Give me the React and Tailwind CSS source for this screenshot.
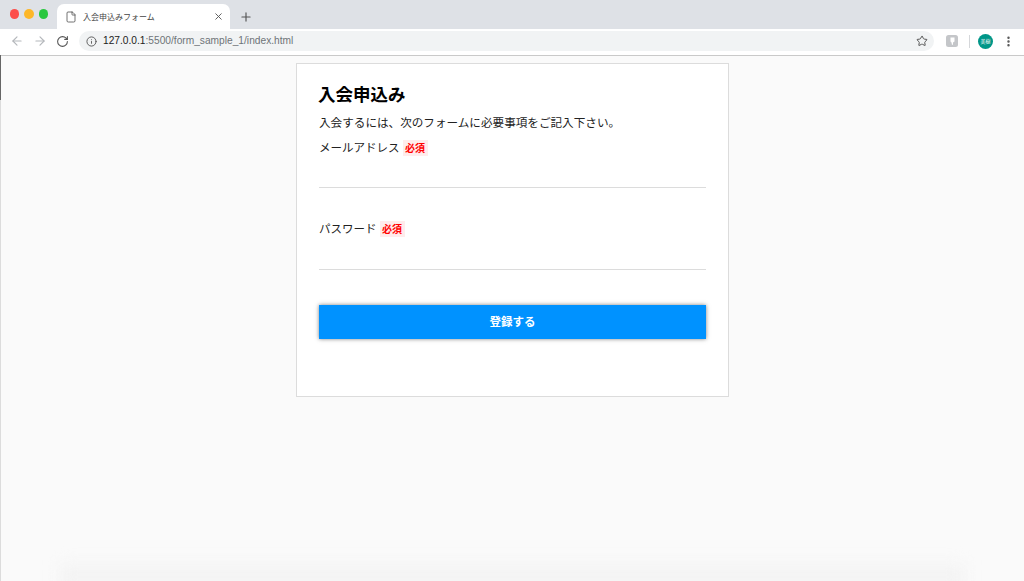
import React from "react";
import { ArrowLeft, ArrowRight, RotateCw, Info, Star, File, X, Plus, EllipsisVertical } from "lucide-react";

const jp = "font-['Noto_Sans_CJK_JP','Liberation_Sans',sans-serif]";

const Required = () => (
  <span className="ml-[3px] inline-block h-[16px] w-[25px] bg-[#ffecec] text-center text-[10px] font-bold leading-[16px] text-[#ff0000]">
    必須
  </span>
);

const Field = ({ label, className, lineClass }) => (
  <div className={className}>
    <div className="flex h-[18px] items-center text-[11.5px] text-[#222]">
      <span>{label}</span>
      <Required />
    </div>
    <div className={`h-px bg-[#dcdcdc] ${lineClass}`} />
  </div>
);

const App = () => {
  return (
    <div className={`relative flex h-[581px] w-[1024px] flex-col overflow-hidden bg-[#fafafa] ${jp}`}>
      {/* Tab bar */}
      <div className="flex h-[29px] shrink-0 bg-[#dee1e6]">
        <div className="flex w-[57px] items-center gap-[5px] pb-[1px] pl-[9.5px]">
          <span className="h-[9.5px] w-[9.5px] rounded-full bg-[#fc4e4a]" />
          <span className="h-[9.5px] w-[9.5px] rounded-full bg-[#fdb728]" />
          <span className="h-[9.5px] w-[9.5px] rounded-full bg-[#29c73f]" />
        </div>
        <div className="mt-[4px] flex h-[25px] w-[173px] items-center rounded-t-[7px] bg-white pl-[8px] pr-[6px]">
          <File size={12} strokeWidth={1.5} className="text-[#444]" />
          <span className="ml-[6px] text-[8px] text-[#444]">入会申込みフォーム</span>
          <X size={11} strokeWidth={2} className="ml-auto text-[#555]" />
        </div>
        <Plus size={14} strokeWidth={2} className="ml-[9px] mt-[10px] text-[#555]" />
      </div>

      {/* Address bar */}
      <div className="flex h-[27px] shrink-0 items-center border-b border-[#c9c9c9] bg-white pb-[2px]">
        <ArrowLeft size={14} strokeWidth={2} className="ml-[10px] text-[#b4b7bb]" />
        <ArrowRight size={14} strokeWidth={2} className="ml-[9px] text-[#b4b7bb]" />
        <RotateCw size={13} strokeWidth={2} className="ml-[9px] text-[#555]" />
        <div className="ml-[10px] flex h-[20px] w-[855px] items-center rounded-full bg-[#f1f3f4] pl-[7px]">
          <Info size={11} strokeWidth={2} className="text-[#555]" />
          <span className="ml-[6px] font-['Liberation_Sans',sans-serif] text-[10.2px] text-[#6f7478]">
            <span className="text-[#222]">127.0.0.1</span>:5500/form_sample_1/index.html
          </span>
          <Star size={12} strokeWidth={2} className="ml-auto mr-[6px] text-[#555]" />
        </div>
        <svg viewBox="0 0 12 12" className="ml-[12px] h-[12px] w-[12px]">
          <rect width="12" height="12" rx="2.5" fill="#c4c6c9" />
          <path d="M4.5 2.5h4v4l-1.5 1v2l-1 .5-.5-2.5-1-1z" fill="#fff" />
        </svg>
        <div className="ml-[11px] h-[13px] w-px bg-[#d5d7da]" />
        <div className="ml-[8px] flex h-[15px] w-[15px] items-center justify-center rounded-full bg-[#009688] text-[5px] text-white">
          美樹
        </div>
        <EllipsisVertical size={13} strokeWidth={2.5} className="ml-[9px] text-[#555]" />
      </div>

      {/* Page */}
      <div className="flex flex-1 justify-center pl-[1px]">
        <form className="mt-[7px] h-[334px] w-[433px] border border-[#dcdcdc] bg-white px-[22px] pt-[18px]">
          <h1 className="-ml-px text-[17.5px] font-bold leading-[24px] text-black">入会申込み</h1>
          <p className="mt-[7px] text-[11.6px] leading-[18px] text-[#222]">
            入会するには、次のフォームに必要事項をご記入下さい。
          </p>
          <Field label="メールアドレス" className="mt-[8px]" lineClass="mt-[30px]" />
          <Field label="パスワード" className="mt-[32px]" lineClass="mt-[31px]" />
          <button
            type="button"
            className="mt-[35px] h-[34px] w-full bg-[#0092ff] text-[11.5px] font-bold text-white shadow-[0_0_4px_rgba(0,0,0,0.5)]"
          >
            登録する
          </button>
        </form>
      </div>

      {/* window edge and shadow left by the screen capture */}
      <div className="absolute left-0 top-[55px] h-[45px] w-px bg-[#666]" />
      <div className="absolute left-0 top-[100px] bottom-0 w-px bg-[#dcdcdc]" />
      <div className="absolute -bottom-[8px] left-[60px] right-[60px] h-[24px] bg-[#f3f3f3] blur-[8px]" />
    </div>
  );
};

export default App;
